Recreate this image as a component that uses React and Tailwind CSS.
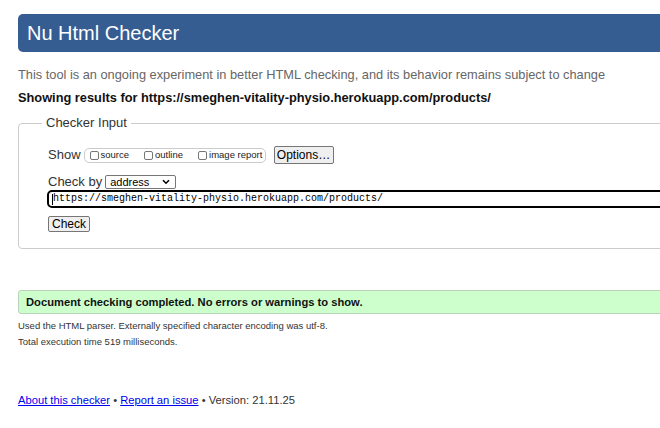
import React from 'react';

const Checkbox = ({ label }) => (
  <label className="flex items-center gap-[2px]">
    <span className="w-[9px] h-[9px] border border-[#767676] rounded-[2px] bg-white" />
    <span className="text-[9.5px] leading-[12px] text-[#222]">{label}</span>
  </label>
);

const App = () => {
  return (
    <div className="w-[660px] h-[428px] overflow-hidden bg-white font-['Liberation_Sans',Arial,sans-serif] text-[#222]">
      <div className="w-[740px] pl-[18px] pt-[14px]">
        {/* Header */}
        <h1 className="h-[38px] rounded-l-[5px] bg-[#365d92] pl-[9px] text-[20px] leading-[38px] text-white">
          Nu Html Checker
        </h1>

        <p className="mt-[15px] text-[12.8px] leading-[16px] text-[#666]">
          This tool is an ongoing experiment in better HTML checking, and its behavior remains subject to change
        </p>
        <p className="mt-[7px] text-[12.8px] leading-[16px] font-bold text-[#111]">
          Showing results for https://smeghen-vitality-physio.herokuapp.com/products/
        </p>

        {/* Checker input */}
        <fieldset className="mt-[9px] border border-[#ccc] rounded-[4px] pl-[29px] pb-[13px]">
          <legend className="ml-[-6px] px-[4px] text-[13px] leading-[16px] text-[#333]">Checker Input</legend>

          <div className="mt-[15px] h-[18px] flex items-center">
            <span className="text-[13px] leading-[16px] text-[#333]">Show</span>
            <div className="ml-[3px] h-[15px] w-[182px] flex items-center gap-[15px] border border-[#ccc] rounded-[5px] pl-[5px]">
              <Checkbox label="source" />
              <Checkbox label="outline" />
              <Checkbox label="image report" />
            </div>
            <button className="ml-[8px] h-[18px] w-[60px] border border-[#767676] rounded-[2px] bg-[#efefef] text-[12px] leading-[16px] text-black">
              Options…
            </button>
          </div>

          <div className="mt-[10px] h-[16px] flex items-center">
            <span className="text-[13px] leading-[16px] text-[#333]">Check by</span>
            <div className="ml-[3px] h-[14px] w-[71px] flex items-center justify-between border border-[#767676] rounded-[2px] pl-[4px] pr-[5px]">
              <span className="text-[11px] leading-[12px] text-black">address</span>
              <svg width="8" height="6" viewBox="0 0 8 6" fill="none">
                <path d="M1 1.2 L4 4.2 L7 1.2" stroke="#000" strokeWidth="1.6" />
              </svg>
            </div>
          </div>

          <div className="ml-[-1px] h-[18px] flex items-center border-2 border-black rounded-l-[5px] pl-[3px]">
            <span className="w-px h-[11px] bg-black" />
            <span className="font-['Liberation_Mono',monospace] text-[10px] leading-[12px] text-black">
              https://smeghen-vitality-physio.herokuapp.com/products/
            </span>
          </div>

          <button className="mt-[8px] h-[16px] w-[42px] border border-[#767676] rounded-[2px] bg-[#efefef] text-[12px] leading-[14px] text-black">
            Check
          </button>
        </fieldset>

        {/* Result */}
        <div className="mt-[41px] h-[24px] flex items-center border border-[#b9d3b9] rounded-l-[3px] bg-[#ccffcc] pl-[7px]">
          <span className="text-[11.2px] leading-[14px] font-bold text-[#111]">
            Document checking completed. No errors or warnings to show.
          </span>
        </div>

        <p className="mt-[6px] text-[9.5px] leading-[12px] text-[#333]">
          Used the HTML parser. Externally specified character encoding was utf-8.
        </p>
        <p className="mt-[4px] text-[9.5px] leading-[12px] text-[#333]">
          Total execution time 519 milliseconds.
        </p>

        {/* Footer */}
        <p className="mt-[45px] text-[11.2px] leading-[14px] text-[#333]">
          <a href="#" className="text-[#0000ee] underline">About this checker</a>
          {' • '}
          <a href="#" className="text-[#0000ee] underline">Report an issue</a>
          {' • Version: 21.11.25'}
        </p>
      </div>
    </div>
  );
};

export default App;
